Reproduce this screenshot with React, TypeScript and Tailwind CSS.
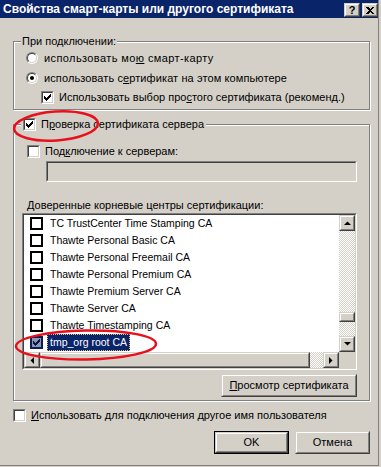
import React from "react";

function Check({ color = "#000" }: { color?: string }) {
  const ys = [2, 3, 4, 3, 2, 1, 0];
  return (
    <svg width="7" height="7" viewBox="0 0 7 7" shapeRendering="crispEdges">
      {ys.map((y, i) => (
        <rect key={i} x={i} y={y} width="1" height="3" fill={color} />
      ))}
    </svg>
  );
}

function Checkbox({ checked }: { checked?: boolean }) {
  return (
    <div className="w-[13px] h-[13px] shrink-0 bg-white border border-t-[#808080] border-l-[#808080] border-b-white border-r-white">
      <div className="w-full h-full border border-t-[#404040] border-l-[#404040] border-b-[#d4d0c8] border-r-[#d4d0c8] flex items-center justify-center">
        {checked && <Check />}
      </div>
    </div>
  );
}

function Radio({ checked }: { checked?: boolean }) {
  return (
    <div className="w-[12px] h-[12px] shrink-0 rounded-full border border-t-[#808080] border-l-[#808080] border-b-white border-r-white">
      <div className="w-full h-full rounded-full bg-white border border-t-[#404040] border-l-[#404040] border-b-[#d4d0c8] border-r-[#d4d0c8] flex items-center justify-center">
        {checked && <div className="w-[4px] h-[4px] rounded-full bg-black" />}
      </div>
    </div>
  );
}

function Raised({ children, className = "" }: { children?: React.ReactNode; className?: string }) {
  return (
    <div className={"bg-[#d4d0c8] border border-t-[#d4d0c8] border-l-[#d4d0c8] border-r-[#404040] border-b-[#404040] " + className}>
      <div className="w-full h-full border border-t-white border-l-white border-r-[#808080] border-b-[#808080] flex items-center justify-center">
        {children}
      </div>
    </div>
  );
}

function Sunken({ children, className = "", inner = "" }: { children?: React.ReactNode; className?: string; inner?: string }) {
  return (
    <div className={"border border-t-[#808080] border-l-[#808080] border-b-white border-r-white " + className}>
      <div className={"w-full h-full border border-t-[#404040] border-l-[#404040] border-b-[#d4d0c8] border-r-[#d4d0c8] " + inner}>
        {children}
      </div>
    </div>
  );
}

function Arrow({ dir }: { dir: "up" | "down" | "left" | "right" }) {
  const pts: Record<string, string> = {
    up: "0,4 7,4 3.5,0.5",
    down: "0,0 7,0 3.5,3.5",
    left: "4,0 4,7 0.5,3.5",
    right: "0,0 0,7 3.5,3.5",
  };
  const vertical = dir === "up" || dir === "down";
  return (
    <svg width={vertical ? 7 : 4} height={vertical ? 4 : 7} viewBox={vertical ? "0 0 7 4" : "0 0 4 7"}>
      <polygon points={pts[dir]} fill="#000" />
    </svg>
  );
}

const items = [
  "TC TrustCenter Time Stamping CA",
  "Thawte Personal Basic CA",
  "Thawte Personal Freemail CA",
  "Thawte Personal Premium CA",
  "Thawte Premium Server CA",
  "Thawte Server CA",
  "Thawte Timestamping CA",
];

const checker =
  "bg-[repeating-conic-gradient(#d4d0c8_0%_25%,#ffffff_0%_50%)] bg-size-[2px_2px]";

export default function App() {
  return (
    <div className="relative w-[381px] h-[467px] bg-[#d4d0c8] overflow-hidden font-['Liberation_Sans',Arial,sans-serif] text-[11px] leading-[13px] text-black">
      <div className="w-[379px] h-[466px] border-r border-b border-[#808080] flex flex-col">
        {/* Title bar */}
        <div className="h-[18px] bg-[#0a246a] flex items-start pl-[3px]">
          <div className="flex-1 text-white font-bold text-[12px] leading-[18px] whitespace-nowrap">
            Свойства смарт-карты или другого сертификата
          </div>
          <div className="flex gap-[2px] pt-[3px]">
            <Raised className="w-[16px] h-[14px]">
              <span className="font-bold text-[11px] leading-[10px]">?</span>
            </Raised>
            <Raised className="w-[16px] h-[14px]">
              <svg width="8" height="7" viewBox="0 0 8 7" shapeRendering="crispEdges">
                <path d="M0 0h2l2 2 2-2h2L5 3.5 8 7H6L4 5 2 7H0l3-3.5z" fill="#000" />
              </svg>
            </Raised>
          </div>
        </div>

        {/* Group 1 */}
        <div className="relative mt-[23px] ml-[13px] w-[357px] h-[69px] border border-[#808080] shadow-[inset_1px_1px_0_#fff,1px_1px_0_#fff]">
          <div className="absolute left-[7px] -top-[8px] bg-[#d4d0c8] px-[1px] leading-[15px]">При подключении:</div>
          <div className="pt-[8px] pl-[12px] flex flex-col">
            <div className="h-[16px] flex items-center">
              <Radio />
              <span className="ml-[6px] tracking-[0.4px]">использовать мо<u>ю</u> смарт-карту</span>
            </div>
            <div className="mt-[4px] h-[16px] flex items-center">
              <Radio checked />
              <span className="ml-[6px] tracking-[0.1px]">использовать с<u>е</u>ртификат на этом компьютере</span>
            </div>
            <div className="mt-[3px] h-[16px] flex items-center pl-[15px]">
              <Checkbox checked />
              <span className="ml-[5px]">Использовать выбор про<u>с</u>того сертификата (рекоменд.)</span>
            </div>
          </div>
        </div>

        {/* Group 2 */}
        <div className="relative mt-[14px] ml-[13px] w-[357px] h-[277px] border border-[#808080] shadow-[inset_1px_1px_0_#fff,1px_1px_0_#fff]">
          <div className="absolute left-[7px] -top-[8px] bg-[#d4d0c8] px-[2px] h-[15px] flex items-center">
            <Checkbox checked />
            <span className="ml-[5px]">П<u>р</u>оверка сертификата сервера</span>
          </div>
          <div className="pt-[18px] flex flex-col">
            <div className="h-[16px] flex items-center pl-[13px]">
              <Checkbox />
              <span className="ml-[5px]">Под<u>к</u>лючение к серверам:</span>
            </div>
            <Sunken className="mt-[2px] ml-[32px] w-[311px] h-[21px]" inner="bg-[#d4d0c8]" />
            <div className="mt-[15px] h-[16px] flex items-center pl-[13px]">
              <span><u>Д</u>оверенные корневые центры сертификации:</span>
            </div>
            <Sunken className="ml-[8px] w-[335px] h-[157px]" inner="bg-white flex flex-col">
              <div className="flex h-[137px]">
                <div className="w-[315px] flex flex-col text-[10.5px]">
                  {items.map((t) => (
                    <div key={t} className="h-[17px] flex items-center pl-[6px] whitespace-nowrap">
                      <div className="w-[13px] h-[13px] border-2 border-black bg-white" />
                      <span className="ml-[4px] px-[3px] leading-[17px]">{t}</span>
                    </div>
                  ))}
                  <div className="h-[17px] flex items-center pl-[6px] whitespace-nowrap">
                    <div className="w-[13px] h-[13px] border-2 border-[#0b1c4f] bg-[#8a96b8] flex items-center justify-center">
                      <Check color="#0a1740" />
                    </div>
                    <span className="ml-[4px] px-[3px] h-[17px] leading-[17px] bg-[#0a246a] text-white outline-1 outline-dotted outline-[#d9c27a] -outline-offset-1">
                      tmp_org root CA
                    </span>
                  </div>
                </div>
                <div className="w-[16px] flex flex-col">
                  <Raised className="w-[16px] h-[16px] shrink-0">
                    <Arrow dir="up" />
                  </Raised>
                  <div className={"h-[81px] " + checker} />
                  <Raised className="w-[16px] h-[10px] shrink-0" />
                  <div className={"flex-1 " + checker} />
                  <Raised className="w-[16px] h-[16px] shrink-0">
                    <Arrow dir="down" />
                  </Raised>
                </div>
              </div>
              <div className="flex h-[16px]">
                <Raised className="w-[16px] h-[16px] shrink-0">
                  <Arrow dir="left" />
                </Raised>
                <Raised className="w-[270px] h-[16px] shrink-0" />
                <div className={"w-[13px] h-[16px] " + checker} />
                <Raised className="w-[16px] h-[16px] shrink-0">
                  <Arrow dir="right" />
                </Raised>
                <div className="w-[16px] h-[16px] bg-[#d4d0c8]" />
              </div>
            </Sunken>
            <div className="mt-[4px] flex justify-end pr-[12px]">
              <Raised className="w-[136px] h-[23px]">
                <span><u>П</u>росмотр сертификата</span>
              </Raised>
            </div>
          </div>
        </div>

        {/* Other user */}
        <div className="mt-[6px] ml-[13px] h-[16px] flex items-center">
          <Checkbox />
          <span className="ml-[5px]"><u>И</u>спользовать для подключения другое имя пользователя</span>
        </div>

        {/* Buttons */}
        <div className="mt-[8px] flex pl-[214px] gap-[6px]">
          <div className="w-[75px] h-[23px] border border-black">
            <Raised className="w-full h-full">
              <span>OK</span>
            </Raised>
          </div>
          <Raised className="w-[75px] h-[23px]">
            <span>Отмена</span>
          </Raised>
        </div>
      </div>

      {/* Red annotation ellipses */}
      <svg className="absolute inset-0 pointer-events-none" width="381" height="467" viewBox="0 0 381 467">
        <ellipse cx="56" cy="126" rx="42" ry="14.5" transform="rotate(-4 56 126)" fill="none" stroke="#e8101c" strokeWidth="2.5" />
        <ellipse cx="86" cy="345" rx="70" ry="14.5" transform="rotate(-1 86 345)" fill="none" stroke="#e8101c" strokeWidth="2.5" />
      </svg>
    </div>
  );
}
